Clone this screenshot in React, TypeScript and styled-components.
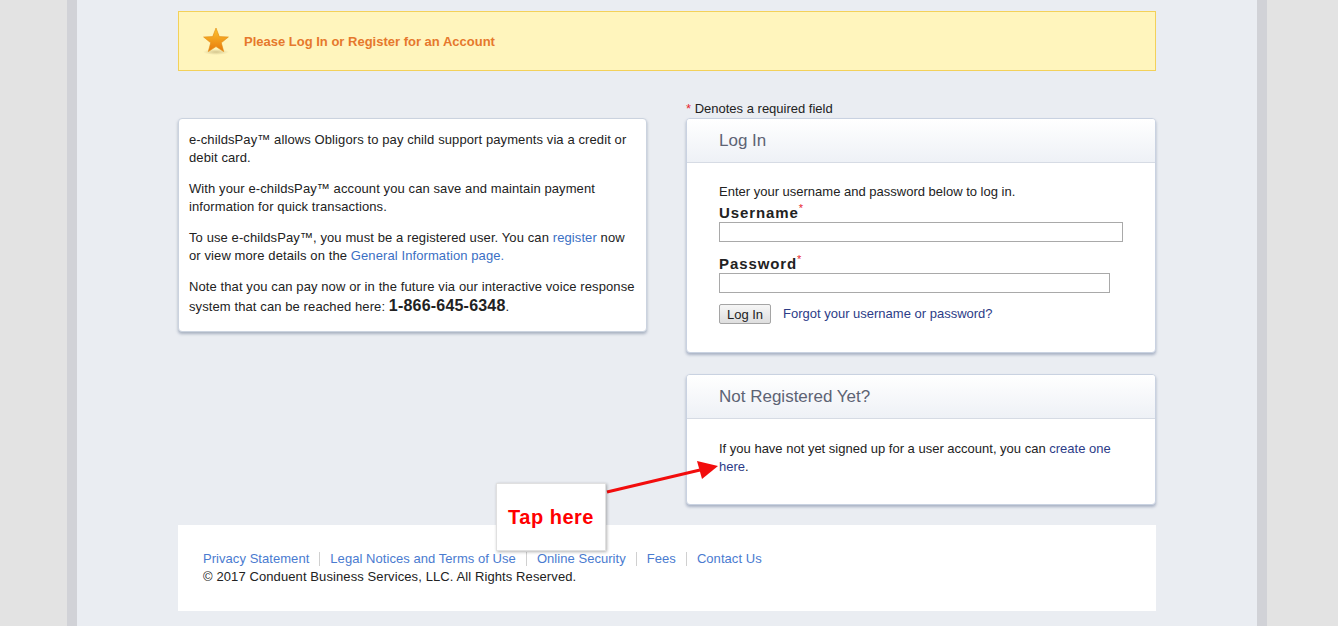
import React from "react";
import styled, { createGlobalStyle } from "styled-components";

const Global = createGlobalStyle`
  html, body { margin: 0; padding: 0; }
  body {
    background: #e3e3e3;
    font-family: "Liberation Sans", Arial, sans-serif;
    font-size: 13px;
    color: #222;
  }
`;

const Page = styled.div`
  position: relative;
  min-height: 626px;
`;

const Shell = styled.div`
  box-sizing: border-box;
  width: 1200px;
  min-height: 626px;
  margin-left: 67px;
  border-left: 10px solid #d1d2d7;
  border-right: 10px solid #d1d2d7;
  background: #eaedf2;
  padding: 11px 101px 15px;
`;

const Banner = styled.div`
  box-sizing: border-box;
  height: 60px;
  background: #fff5bd;
  border: 1px solid #f3d15a;
  display: flex;
  align-items: center;
  padding-left: 22px;
  gap: 13px;
`;

const BannerText = styled.span`
  color: #e6782c;
  font-weight: bold;
  font-size: 13px;
`;

const Columns = styled.div`
  display: flex;
  gap: 39px;
  align-items: flex-start;
  margin-top: 30px;
`;

const InfoBox = styled.div`
  box-sizing: border-box;
  width: 469px;
  margin-top: 17px;
  background: #fff;
  border: 1px solid #cbd3df;
  border-radius: 4px;
  box-shadow: 0 2px 3px rgba(70, 90, 120, 0.4);
  padding: 12px 10px 2px;
  letter-spacing: 0.1px;
`;

const Para = styled.p`
  margin: 0 0 13px;
  line-height: 18px;
`;

const Phone = styled.strong`
  font-size: 16px;
  line-height: 20px;
  letter-spacing: 0.2px;
`;

const Link = styled.a<{ $dark?: boolean }>`
  color: ${(p) => (p.$dark ? "#2c3c87" : "#3b6fc4")};
  text-decoration: none;
  cursor: pointer;
`;

const RightColumn = styled.div`
  width: 470px;
  display: flex;
  flex-direction: column;
`;

const RequiredNote = styled.div`
  line-height: 16px;
  margin-bottom: 1px;
`;

const Star = styled.span`
  color: #e8262f;
`;

const Panel = styled.section<{ $gap?: number }>`
  box-sizing: border-box;
  margin-top: ${(p) => p.$gap ?? 0}px;
  background: #fff;
  border: 1px solid #c9d2e1;
  border-radius: 4px;
  box-shadow: 0 2px 3px rgba(70, 90, 130, 0.4);
  overflow: hidden;
`;

const PanelHeader = styled.header`
  height: 43px;
  display: flex;
  align-items: center;
  padding-left: 32px;
  background: linear-gradient(#ffffff, #eef1f6);
  border-bottom: 1px solid #d6dbe4;
  font-size: 17px;
  color: #5d6374;
`;

const PanelBody = styled.div<{ $top?: number }>`
  padding: ${(p) => p.$top ?? 20}px 32px 28px;
  line-height: 18px;
`;

const FieldLabel = styled.label<{ $top?: number }>`
  display: block;
  margin-top: ${(p) => p.$top ?? 3}px;
  font-size: 15px;
  font-weight: bold;
  line-height: 18px;
  color: #222;
  letter-spacing: 0.9px;
`;

const Sup = styled.sup`
  color: #e8262f;
  font-size: 11px;
  font-weight: normal;
  line-height: 0;
  vertical-align: 6px;
  margin-left: 0;
  letter-spacing: 0;
`;

const TextInput = styled.input<{ $w: number }>`
  box-sizing: border-box;
  display: block;
  width: ${(p) => p.$w}px;
  height: 20px;
  margin: 0;
  border: 1px solid #a9a9a9;
  background: #fff;
  padding: 1px 3px;
  font-family: inherit;
`;

const Actions = styled.div`
  display: flex;
  align-items: center;
  gap: 12px;
  margin-top: 11px;
`;

const Button = styled.button`
  box-sizing: border-box;
  width: 52px;
  height: 20px;
  padding: 0;
  border: 1px solid #a5a5a5;
  border-radius: 2px;
  background: linear-gradient(#f6f6f6, #dedede);
  font-family: inherit;
  font-size: 13px;
  color: #222;
`;

const Footer = styled.footer`
  box-sizing: border-box;
  height: 86px;
  margin-top: 20px;
  background: #fff;
  padding: 25px 25px;
  line-height: 18px;
`;

const FooterLinks = styled.div`
  display: flex;
  align-items: center;
  height: 18px;
  letter-spacing: 0.05px;
`;

const FooterLink = styled.a<{ $first?: boolean }>`
  color: #4a7bd0;
  text-decoration: none;
  padding: 0 10px;
  ${(p) => (p.$first ? "padding-left: 0;" : "border-left: 1px solid #d0d0d0;")}
  line-height: 14px;
`;

const Copyright = styled.div`
  letter-spacing: 0.1px;
`;

const Callout = styled.div`
  position: absolute;
  left: 496px;
  top: 483px;
  box-sizing: border-box;
  width: 110px;
  height: 68px;
  background: #fff;
  border: 1px solid #e0e0e0;
  box-shadow: 1px 1px 3px rgba(0, 0, 0, 0.3);
  display: flex;
  align-items: center;
  justify-content: center;
  color: #ff0000;
  font-weight: bold;
  font-size: 20px;
  letter-spacing: 0.5px;
`;

const ArrowLayer = styled.svg`
  position: absolute;
  left: 600px;
  top: 455px;
  overflow: visible;
`;

function StarIcon() {
  return (
    <svg width="30" height="30" viewBox="0 0 30 30">
      <defs>
        <linearGradient id="starFill" x1="0" y1="0" x2="0" y2="1">
          <stop offset="0" stopColor="#fcc430" />
          <stop offset="1" stopColor="#e8780a" />
        </linearGradient>
        <radialGradient id="starShadow">
          <stop offset="0" stopColor="#b9a870" stopOpacity="0.6" />
          <stop offset="1" stopColor="#b9a870" stopOpacity="0" />
        </radialGradient>
      </defs>
      <ellipse cx="15" cy="26" rx="13" ry="3" fill="url(#starShadow)" />
      <path
        d="M15 2 L18.3 10.6 L27.4 11 L20.3 16.8 L22.7 25.6 L15 20.6 L7.3 25.6 L9.7 16.8 L2.6 11 L11.7 10.6 Z"
        fill="url(#starFill)"
        stroke="#e08a12"
        strokeWidth="0.6"
        strokeLinejoin="round"
      />
    </svg>
  );
}

export default function App() {
  return (
    <Page>
      <Global />
      <Shell>
        <Banner>
          <StarIcon />
          <BannerText>Please Log In or Register for an Account</BannerText>
        </Banner>

        <Columns>
          <InfoBox>
            <Para>
              e-childsPay™ allows Obligors to pay child support payments via a credit or debit card.
            </Para>
            <Para>
              With your e-childsPay™ account you can save and maintain payment information for quick
              transactions.
            </Para>
            <Para>
              To use e-childsPay™, you must be a registered user. You can <Link>register</Link> now
              or view more details on the <Link>General Information page.</Link>
            </Para>
            <Para>
              Note that you can pay now or in the future via our interactive voice response system
              that can be reached here: <Phone>1-866-645-6348</Phone>.
            </Para>
          </InfoBox>

          <RightColumn>
            <RequiredNote>
              <Star>*</Star> Denotes a required field
            </RequiredNote>

            <Panel>
              <PanelHeader>Log In</PanelHeader>
              <PanelBody>
                <div>Enter your username and password below to log in.</div>
                <FieldLabel>
                  Username<Sup>*</Sup>
                </FieldLabel>
                <TextInput $w={404} type="text" />
                <FieldLabel $top={13}>
                  Password<Sup>*</Sup>
                </FieldLabel>
                <TextInput $w={391} type="password" />
                <Actions>
                  <Button>Log In</Button>
                  <Link $dark>Forgot your username or password?</Link>
                </Actions>
              </PanelBody>
            </Panel>

            <Panel $gap={21}>
              <PanelHeader>Not Registered Yet?</PanelHeader>
              <PanelBody $top={21}>
                If you have not yet signed up for a user account, you can{" "}
                <Link $dark>create one here</Link>.
              </PanelBody>
            </Panel>
          </RightColumn>
        </Columns>

        <Footer>
          <FooterLinks>
            <FooterLink $first>Privacy Statement</FooterLink>
            <FooterLink>Legal Notices and Terms of Use</FooterLink>
            <FooterLink>Online Security</FooterLink>
            <FooterLink>Fees</FooterLink>
            <FooterLink>Contact Us</FooterLink>
          </FooterLinks>
          <Copyright>© 2017 Conduent Business Services, LLC. All Rights Reserved.</Copyright>
        </Footer>
      </Shell>

      <ArrowLayer width="130" height="50">
        <line x1="7" y1="37" x2="100" y2="15" stroke="#f20d0d" strokeWidth="3" />
        <polygon points="118,11 97,6 102,24" fill="#f20d0d" />
      </ArrowLayer>
      <Callout>Tap here</Callout>
    </Page>
  );
}
